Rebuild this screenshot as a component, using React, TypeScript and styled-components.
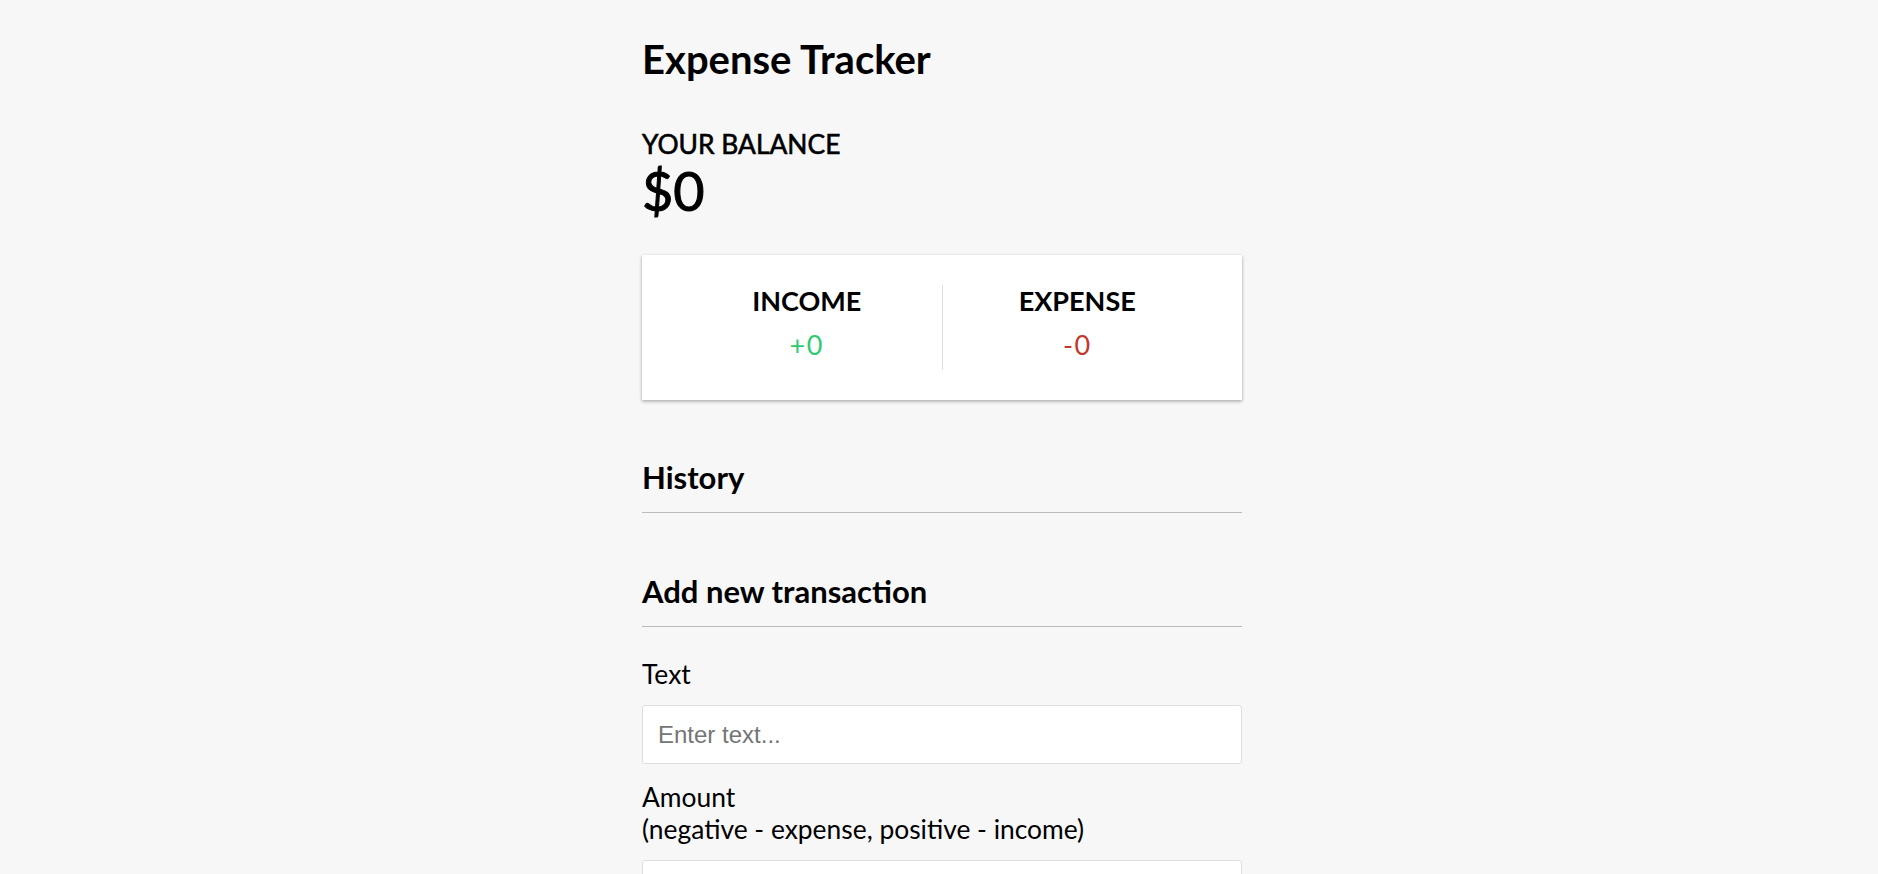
import React from "react";
import styled, { createGlobalStyle } from "styled-components";

const GlobalStyle = createGlobalStyle`
  * { box-sizing: border-box; }
  body {
    margin: 0;
    background-color: #f7f7f7;
    font-family: Lato, "Noto Sans", sans-serif;
    color: #000;
  }
`;

const Page = styled.div`
  padding: 35px 0 0 6px;
`;

const Container = styled.div`
  width: 600px;
  margin: 0 auto;
`;

const Title = styled.h1`
  font-size: 40px;
  font-weight: 700;
  line-height: 1.2;
  margin: 0 0 46px;
`;

const BalanceLabel = styled.h4`
  font-size: 26.4px;
  font-weight: 400;
  -webkit-text-stroke: 0.6px #000;
  text-transform: uppercase;
  line-height: 30px;
  margin: 0;
`;

const BalanceValue = styled.h1`
  font-size: 54px;
  font-weight: 400;
  -webkit-text-stroke: 1px #000;
  line-height: 1.2;
  margin: 0;
`;

const IncExpCard = styled.div`
  background-color: #fff;
  box-shadow: 0 2px 4px rgba(0, 0, 0, 0.12), 0 1px 3px rgba(0, 0, 0, 0.24);
  padding: 30px;
  display: flex;
  justify-content: space-between;
  margin: 31px 0 30px;
`;

const IncExpColumn = styled.div<{ $divider?: boolean }>`
  flex: 1;
  text-align: center;
  border-right: ${(p) => (p.$divider ? "1px solid #dedede" : "none")};
`;

const ColumnTitle = styled.h4`
  font-size: 27px;
  font-weight: 700;
  text-transform: uppercase;
  line-height: 1.2;
  margin: 0;
`;

const Money = styled.p<{ $kind: "plus" | "minus" }>`
  font-size: 27px;
  letter-spacing: 1.5px;
  line-height: 1.2;
  margin: 11.5px 0 8.5px;
  color: ${(p) => (p.$kind === "plus" ? "#2ecc71" : "#c0392b")};
`;

const SectionTitle = styled.h3`
  font-size: 31px;
  font-weight: 700;
  line-height: 1.2;
  border-bottom: 1px solid #bbb;
  padding-bottom: 16px;
  margin: 59px 0 14.5px;
`;

const List = styled.ul`
  list-style-type: none;
  padding: 0;
  margin: 0 0 60px;
`;

const FormControl = styled.div``;

const Label = styled.label`
  display: inline-block;
  font-size: 26.4px;
  line-height: 32px;
  margin: 16.5px 0 15.5px;
`;

const Input = styled.input`
  display: block;
  width: 100%;
  border: 1px solid #dedede;
  border-radius: 3px;
  background: #fff;
  font-family: "Liberation Sans", Arial, sans-serif;
  font-size: 24px;
  padding: 14.5px 15px;
  outline: none;
  &::placeholder {
    color: #757575;
  }
`;

const Button = styled.button`
  cursor: pointer;
  background-color: #9c88ff;
  box-shadow: 0 1px 3px rgba(0, 0, 0, 0.12), 0 1px 2px rgba(0, 0, 0, 0.24);
  color: #fff;
  border: 0;
  display: block;
  font-size: 24px;
  margin: 15px 0 45px;
  padding: 15px;
  width: 100%;
`;

export default function App() {
  return (
    <>
      <GlobalStyle />
      <Page>
        <Container>
          <Title>Expense Tracker</Title>
          <BalanceLabel>Your Balance</BalanceLabel>
          <BalanceValue>$0</BalanceValue>
          <IncExpCard>
            <IncExpColumn $divider>
              <ColumnTitle>Income</ColumnTitle>
              <Money $kind="plus">+0</Money>
            </IncExpColumn>
            <IncExpColumn>
              <ColumnTitle>Expense</ColumnTitle>
              <Money $kind="minus">-0</Money>
            </IncExpColumn>
          </IncExpCard>
          <SectionTitle>History</SectionTitle>
          <List />
          <SectionTitle>Add new transaction</SectionTitle>
          <form onSubmit={(e) => e.preventDefault()}>
            <FormControl>
              <Label htmlFor="text">Text</Label>
              <Input type="text" id="text" placeholder="Enter text..." />
            </FormControl>
            <FormControl>
              <Label htmlFor="amount">
                Amount <br />
                (negative - expense, positive - income)
              </Label>
              <Input type="number" id="amount" placeholder="Enter amount..." />
            </FormControl>
            <Button>Add transaction</Button>
          </form>
        </Container>
      </Page>
    </>
  );
}
